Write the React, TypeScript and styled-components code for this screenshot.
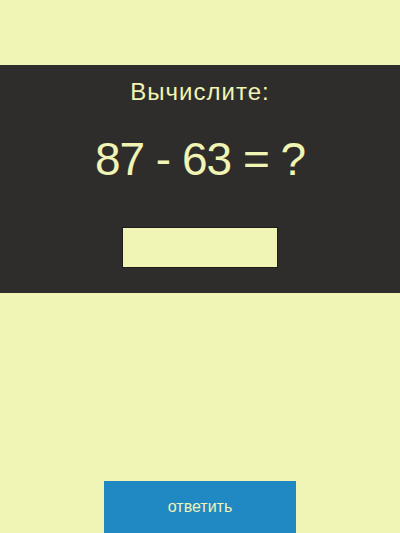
import React, { useState } from "react";
import styled, { createGlobalStyle } from "styled-components";

const GlobalStyle = createGlobalStyle`
  html, body {
    margin: 0;
    padding: 0;
    background-color: #f0f4b4;
    font-family: "Liberation Sans", Arial, sans-serif;
  }
`;

const Page = styled.div`
  width: 400px;
  height: 533px;
  overflow: hidden;
  display: flex;
  flex-direction: column;
  align-items: center;
`;

const Board = styled.div`
  margin-top: 65px;
  width: 100%;
  box-sizing: border-box;
  padding: 15px 0 25px;
  background-color: #2e2d2b;
  color: #f0f4b4;
  display: flex;
  flex-direction: column;
  align-items: center;
`;

const Title = styled.div`
  font-size: 24px;
  line-height: 24px;
  letter-spacing: 1px;
`;

const Task = styled.div`
  margin-top: 32px;
  font-size: 46px;
  line-height: 46px;
  letter-spacing: -1px;
`;

const AnswerInput = styled.input`
  margin-top: 45px;
  width: 156px;
  height: 41px;
  box-sizing: border-box;
  border: 1px solid #1e1d1b;
  background-color: #f0f4b4;
  outline: none;
  font-family: inherit;
  font-size: 20px;
  text-align: center;
  color: #2e2d2b;
`;

const SubmitButton = styled.button`
  margin-top: 188px;
  width: 192px;
  height: 54px;
  border: none;
  background-color: #2088c3;
  color: #f0f4b4;
  font-family: "Liberation Sans", Arial, sans-serif;
  font-size: 16px;
  cursor: pointer;
`;

export default function App() {
  const [answer, setAnswer] = useState("");

  return (
    <Page>
      <GlobalStyle />
      <Board>
        <Title>Вычислите:</Title>
        <Task>87 - 63 = ?</Task>
        <AnswerInput value={answer} onChange={(e) => setAnswer(e.target.value)} />
      </Board>
      <SubmitButton>ответить</SubmitButton>
    </Page>
  );
}
